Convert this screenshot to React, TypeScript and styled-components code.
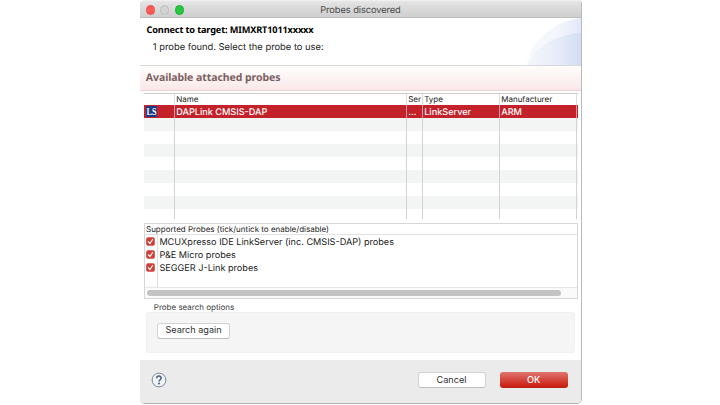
import React from "react";
import styled, { createGlobalStyle } from "styled-components";

const Global = createGlobalStyle`
  * { box-sizing: border-box; }
  body {
    margin: 0;
    background: #fff;
    overflow: hidden;
    font-family: Inter, "Liberation Sans", sans-serif;
    font-size: 9.15px;
    color: #1c1c1c;
    text-rendering: geometricPrecision;
    white-space: nowrap;
  }
`;

const Stage = styled.main`
  width: 720px;
  height: 405px;
  padding-left: 140px;
`;

const Dialog = styled.section`
  width: 442px;
  height: 404px;
  display: flex;
  flex-direction: column;
  border-right: 1px solid #bababa;
  border-bottom: 1px solid #b0b0b0;
  border-radius: 4px 4px 5px 5px;
  overflow: hidden;
  background: #fff;
`;

const TitleBar = styled.header`
  height: 18px;
  flex: none;
  display: grid;
  grid-template-columns: 1fr auto 1fr;
  align-items: center;
  padding: 1px 0 0 5.5px;
  background: linear-gradient(#f3f3f3 0, #e3e3e3 2px, #d0d0d0 16px);
  border-bottom: 1px solid #bcbcbc;
`;

const Lights = styled.div`
  display: flex;
  gap: 5.4px;
  padding-top: 1px;
`;

const Light = styled.i<{ $fill: string; $edge: string }>`
  width: 9.2px;
  height: 9.2px;
  border-radius: 50%;
  background: ${(p) => p.$fill};
  border: 0.5px solid ${(p) => p.$edge};
`;

const Title = styled.h1`
  margin: 0 5.5px 0 0;
  padding-top: 3px;
  font-size: 9.3px;
  line-height: 14px;
  font-weight: 400;
  letter-spacing: -0.09px;
  color: #484848;
`;

const Intro = styled.div`
  height: 48px;
  flex: none;
  display: flex;
  justify-content: space-between;
  border-bottom: 1px solid #d9d9dc;
`;

const IntroText = styled.div`
  padding: 4px 0 0 6.5px;
`;

const Target = styled.h2`
  margin: 0;
  font: 700 9.2px/15px "Noto Sans", sans-serif;
  letter-spacing: -0.15px;
  color: #000;
`;

const Message = styled.p`
  margin: 3px 0 0 6.3px;
  font-size: 9.35px;
  line-height: 15px;
`;

const Section = styled.h3`
  height: 25px;
  flex: none;
  margin: 0;
  padding-left: 5.8px;
  font: 700 10.5px/25px "Noto Sans", sans-serif;
  letter-spacing: -0.07px;
  color: #7a5f60;
  background: linear-gradient(#fffdfd, #fae8e8);
  border-bottom: 1px solid #ecd2d2;
`;

const Content = styled.div`
  flex: 1;
  padding: 2px 4px 0 4px;
`;

const columns = "31px 232px 16px 77px 77px 1fr";

const Table = styled.div`
  width: 433.5px;
  height: 126px;
  border-top: 1px solid #cfcfcf;
  overflow: hidden;
`;

const TableRow = styled.div<{ $kind: "head" | "selected" | "odd" | "even" | "last" }>`
  display: grid;
  grid-template-columns: ${columns};
  grid-template-rows: 100%;
  height: ${(p) => (p.$kind === "head" ? "11px" : "13px")};
  line-height: ${(p) => (p.$kind === "head" ? "11px" : "16px")};
  font-size: ${(p) => (p.$kind === "head" ? "8px" : "9.15px")};
  font-weight: ${(p) => (p.$kind === "selected" ? 500 : 400)};
  color: ${(p) => (p.$kind === "selected" ? "#fff" : "#202020")};
  background: ${(p) =>
    p.$kind === "selected" ? "#c4222a" : p.$kind === "odd" ? "#f3f5f4" : "#fff"};
`;

const Cell = styled.span<{ $line: string }>`
  padding-left: 1.2px;
  overflow: hidden;
  border-right: 1px solid ${(p) => p.$line};
  &:first-child { padding-left: 2px; }
`;

const Supported = styled.div`
  width: 434px;
  height: 75.5px;
  margin-top: 4px;
  display: flex;
  flex-direction: column;
  border: 1px solid #d6d6d6;
  border-bottom-width: 1.5px;
`;

const SupportedHead = styled.div`
  height: 11px;
  line-height: 10.5px;
  padding-left: 1px;
  font-size: 8px;
  border-bottom: 1px solid #e2e2e2;
`;

const ProbeList = styled.ul`
  flex: 1;
  margin: 0;
  padding: 0;
  list-style: none;
  background: linear-gradient(#dedede, #dedede) 12px 0 / 1px 100% no-repeat;
`;

const Probe = styled.li`
  height: 13px;
  display: flex;
  align-items: center;
  gap: 4.2px;
  padding-left: 1.2px;
  line-height: 13px;
`;

const ProbeName = styled.span`
  padding-top: 2px;
`;

const ScrollTrack = styled.div`
  height: 10.5px;
  border-top: 1px solid #e6e6e6;
  background: #fafafa;
  padding: 2px 0 0 2px;
`;

const ScrollThumb = styled.div`
  width: 414px;
  height: 6px;
  border-radius: 3px;
  background: #c3c3c3;
`;

const OptionsLabel = styled.div`
  height: 13.5px;
  padding: 2.5px 0 0 9.8px;
  font-size: 8px;
  line-height: 12px;
  color: #3c3c3c;
`;

const Options = styled.div`
  width: 429px;
  height: 41px;
  margin-left: 2px;
  padding: 10px 0 0 10.3px;
  background: #f5f5f5;
  border: 1px solid #f0f0f0;
  border-radius: 2px;
`;

const Button = styled.button<{ $width: number; $primary?: boolean }>`
  display: block;
  width: ${(p) => p.$width}px;
  height: 15.5px;
  padding: 0 0 2px;
  font: ${(p) => (p.$primary ? 500 : 400)} 9.15px/11px Inter, sans-serif;
  color: ${(p) => (p.$primary ? "#fff" : "#303030")};
  background: ${(p) => (p.$primary ? "linear-gradient(#df7670, #d4443a 50%, #c8190c)" : "#fff")};
  border: 1px solid ${(p) => (p.$primary ? "transparent" : "#d2d2d2")};
  border-bottom-color: ${(p) => (p.$primary ? "#b92318" : "#bebebe")};
  background-clip: border-box;
  background-origin: border-box;
  border-radius: 3px;
`;

const Footer = styled.footer`
  height: 43px;
  flex: none;
  display: flex;
  align-items: flex-start;
  padding: 12.4px 13px 0 11.4px;
  background: #ebebeb;
`;

const Actions = styled.div`
  margin-left: auto;
  display: flex;
  gap: 14px;
`;

const LogoBadge = styled.svg`
  display: block;
  width: 12px;
  height: 11px;
  margin-top: 1px;
`;

const Check = () => (
  <svg width="9" height="9" viewBox="0 0 9 9">
    <rect x="0.2" y="0.2" width="8.6" height="8.6" rx="1.8" fill="#cf3f38" />
    <path d="M2.5 4.8 4 6.5 6.6 2.5" fill="none" stroke="#fff" strokeWidth="1.2" strokeLinecap="round" strokeLinejoin="round" />
  </svg>
);

const Swoosh = () => (
  <svg width="54" height="47" viewBox="0 0 54 47">
    <defs>
      <linearGradient id="outer">
        <stop offset="0" stopColor="#f7f9fd" />
        <stop offset="0.55" stopColor="#f3f6fc" />
        <stop offset="1" stopColor="#e2e9f8" />
      </linearGradient>
      <linearGradient id="inner">
        <stop offset="0" stopColor="#f5f7fc" />
        <stop offset="0.5" stopColor="#e8edf9" />
        <stop offset="1" stopColor="#d3def3" />
      </linearGradient>
    </defs>
    <path d="M0 47C2 25 25 3 54 0V47Z" fill="url(#outer)" />
    <path d="M0 47C5 32 27 17 54 14.5V47Z" fill="url(#inner)" />
  </svg>
);

const Help = () => (
  <svg width="16" height="16" viewBox="0 0 16 16">
    <circle cx="8" cy="8" r="6.9" fill="#f1f3f6" stroke="#6a7c96" strokeWidth="0.9" />
    <path d="M5.8 6.2C5.8 3.4 10.2 3.4 10.2 6.1C10.2 7.7 8 7.8 8 9.6" fill="none" stroke="#455c80" strokeWidth="1.5" />
    <circle cx="8" cy="11.6" r="1" fill="#455c80" />
  </svg>
);

const emptyRows = ["odd", "even", "odd", "even", "odd", "even", "odd", "last"] as const;
const probes = [
  "MCUXpresso IDE LinkServer (inc. CMSIS-DAP) probes",
  "P&E Micro probes",
  "SEGGER J-Link probes",
];

export default function App() {
  return (
    <Stage>
      <Global />
      <Dialog>
        <TitleBar>
          <Lights>
            <Light $fill="#fc5b57" $edge="#e2504b" />
            <Light $fill="#d4d4d4" $edge="#bcbcbc" />
            <Light $fill="#27c840" $edge="#20ae35" />
          </Lights>
          <Title>Probes discovered</Title>
        </TitleBar>
        <Intro>
          <IntroText>
            <Target>Connect to target: MIMXRT1011xxxxx</Target>
            <Message>1 probe found. Select the probe to use:</Message>
          </IntroText>
          <Swoosh />
        </Intro>
        <Section>Available attached probes</Section>
        <Content>
          <Table>
            <TableRow $kind="head">
              {["", "Name", "Ser", "Type", "Manufacturer"].map((name, i) => (
                <Cell key={i} $line="#dddddd">{name}</Cell>
              ))}
            </TableRow>
            <TableRow $kind="selected">
              <Cell $line="#dc9a9d">
                <LogoBadge viewBox="0 0 12 11">
                  <rect width="11" height="11" rx="1.2" fill="#1d3c88" />
                  <text x="0.6" y="9" fontFamily="Liberation Serif, serif" fontWeight="700" fontSize="10.5" textLength="10" lengthAdjust="spacingAndGlyphs" fill="#fff">LS</text>
                </LogoBadge>
              </Cell>
              <Cell $line="#dc9a9d">DAPLink CMSIS-DAP</Cell>
              <Cell $line="#dc9a9d">...</Cell>
              <Cell $line="#dc9a9d">LinkServer</Cell>
              <Cell $line="#dc9a9d">ARM</Cell>
            </TableRow>
            {emptyRows.map((kind, r) => (
              <TableRow key={r} $kind={kind}>
                {[0, 1, 2, 3, 4].map((c) => <Cell key={c} $line="#d3d3d3" />)}
              </TableRow>
            ))}
          </Table>
          <Supported>
            <SupportedHead>Supported Probes (tick/untick to enable/disable)</SupportedHead>
            <ProbeList>
              {probes.map((name) => (
                <Probe key={name}><Check /><ProbeName>{name}</ProbeName></Probe>
              ))}
            </ProbeList>
            <ScrollTrack><ScrollThumb /></ScrollTrack>
          </Supported>
          <OptionsLabel>Probe search options</OptionsLabel>
          <Options><Button $width={72.5}>Search again</Button></Options>
        </Content>
        <Footer>
          <Help />
          <Actions>
            <Button $width={68}>Cancel</Button>
            <Button $width={68.5} $primary>OK</Button>
          </Actions>
        </Footer>
      </Dialog>
    </Stage>
  );
}
